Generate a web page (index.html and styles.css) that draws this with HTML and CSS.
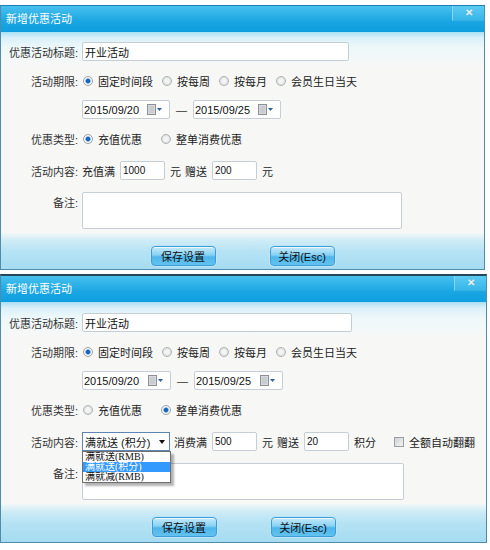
FILE: index.html
```html
<!DOCTYPE html>
<html lang="zh-CN">

<head>
    <meta charset="UTF-8">
    <link rel="stylesheet" href="styles.css">
    <title>新增优惠活动</title>
</head>

<body>
    <!-- 充值优惠 -->
    <div class="dialog d1">
        <div class="titlebar">
            <span class="title">新增优惠活动</span>
            <span class="close">✕</span>
        </div>
        <div class="body">
            <div class="row">
                <label class="lbl">优惠活动标题:</label>
                <input type="text" class="txt title-input" value="开业活动">
            </div>
            <div class="row">
                <label class="lbl">活动期限:</label>
                <span class="opt"><i class="radio on"></i>固定时间段</span>
                <span class="opt"><i class="radio"></i>按每周</span>
                <span class="opt"><i class="radio"></i>按每月</span>
                <span class="opt"><i class="radio"></i>会员生日当天</span>
            </div>
            <div class="row">
                <label class="lbl"></label>
                <div class="date">
                    <span class="date-val">2015/09/20</span>
                    <svg class="cal" width="16" height="11" viewBox="0 0 16 11">
                        <rect x="0.5" y="0.5" width="8" height="10" fill="#e4e6e8" stroke="#8c9096" />
                        <rect x="1.5" y="1.5" width="6" height="8" fill="#c9ccd0" />
                        <polygon points="10,4 15,4 12.5,7" fill="#2d5fa6" />
                    </svg>
                </div>
                <span class="dash">—</span>
                <div class="date">
                    <span class="date-val">2015/09/25</span>
                    <svg class="cal" width="16" height="11" viewBox="0 0 16 11">
                        <rect x="0.5" y="0.5" width="8" height="10" fill="#e4e6e8" stroke="#8c9096" />
                        <rect x="1.5" y="1.5" width="6" height="8" fill="#c9ccd0" />
                        <polygon points="10,4 15,4 12.5,7" fill="#2d5fa6" />
                    </svg>
                </div>
            </div>
            <div class="row type-row">
                <label class="lbl">优惠类型:</label>
                <span class="opt"><i class="radio on"></i>充值优惠</span>
                <span class="opt"><i class="radio"></i>整单消费优惠</span>
            </div>
            <div class="row content-row">
                <label class="lbl">活动内容:</label>
                <span>充值满</span>
                <input type="text" class="txt num" value="1000">
                <span>元</span>
                <span>赠送</span>
                <input type="text" class="txt num" value="200">
                <span>元</span>
            </div>
            <div class="row remark-row">
                <label class="lbl">备注:</label>
                <textarea class="remark"></textarea>
            </div>
        </div>
        <div class="footer">
            <button class="btn">保存设置</button>
            <button class="btn">关闭(Esc)</button>
        </div>
    </div>

    <!-- 整单消费优惠 -->
    <div class="dialog d2">
        <div class="titlebar">
            <span class="title">新增优惠活动</span>
            <span class="close">✕</span>
        </div>
        <div class="body">
            <div class="row">
                <label class="lbl">优惠活动标题:</label>
                <input type="text" class="txt title-input" value="开业活动">
            </div>
            <div class="row">
                <label class="lbl">活动期限:</label>
                <span class="opt"><i class="radio on"></i>固定时间段</span>
                <span class="opt"><i class="radio"></i>按每周</span>
                <span class="opt"><i class="radio"></i>按每月</span>
                <span class="opt"><i class="radio"></i>会员生日当天</span>
            </div>
            <div class="row">
                <label class="lbl"></label>
                <div class="date">
                    <span class="date-val">2015/09/20</span>
                    <svg class="cal" width="16" height="11" viewBox="0 0 16 11">
                        <rect x="0.5" y="0.5" width="8" height="10" fill="#e4e6e8" stroke="#8c9096" />
                        <rect x="1.5" y="1.5" width="6" height="8" fill="#c9ccd0" />
                        <polygon points="10,4 15,4 12.5,7" fill="#2d5fa6" />
                    </svg>
                </div>
                <span class="dash">—</span>
                <div class="date">
                    <span class="date-val">2015/09/25</span>
                    <svg class="cal" width="16" height="11" viewBox="0 0 16 11">
                        <rect x="0.5" y="0.5" width="8" height="10" fill="#e4e6e8" stroke="#8c9096" />
                        <rect x="1.5" y="1.5" width="6" height="8" fill="#c9ccd0" />
                        <polygon points="10,4 15,4 12.5,7" fill="#2d5fa6" />
                    </svg>
                </div>
            </div>
            <div class="row type-row">
                <label class="lbl">优惠类型:</label>
                <span class="opt"><i class="radio"></i>充值优惠</span>
                <span class="opt"><i class="radio on"></i>整单消费优惠</span>
            </div>
            <div class="row content-row">
                <label class="lbl">活动内容:</label>
                <div class="select">
                    <span>满就送 (积分)</span>
                    <i class="arrow"></i>
                    <div class="list">
                        <div>满就送(RMB)</div>
                        <div class="hl">满就送(积分)</div>
                        <div>满就减(RMB)</div>
                    </div>
                </div>
                <span>消费满</span>
                <input type="text" class="txt num" value="500">
                <span>元</span>
                <span>赠送</span>
                <input type="text" class="txt num" value="20">
                <span>积分</span>
                <span class="check"><i class="chk"></i>全额自动翻翻</span>
            </div>
            <div class="row remark-row">
                <label class="lbl">备注:</label>
                <textarea class="remark"></textarea>
            </div>
        </div>
        <div class="footer">
            <button class="btn">保存设置</button>
            <button class="btn">关闭(Esc)</button>
        </div>
    </div>
</body>

</html>
```

FILE: styles.css
```css
body {
    margin: 0;
    padding-top: 5px;
    background: #fff;
    font-family: "Liberation Sans", "Noto Sans CJK SC", sans-serif;
    font-size: 11px;
    color: #222;
}

.dialog {
    width: 485px;
    box-sizing: border-box;
    border: 1px solid #4f8cab;
    border-top: 1px solid #1d7fb6;
    background: #f7f8f6;
}

.d2 {
    width: 487px;
    margin-top: 4px;
    border-top: 2px solid #22465a;
}

.titlebar {
    height: 26px;
    display: flex;
    justify-content: space-between;
    align-items: flex-start;
    background: linear-gradient(#48c0ee, #1aa6e2 60%, #0e9edf);
}

.title {
    color: #fff;
    line-height: 27px;
    padding-left: 5px;
}

.close {
    width: 31px;
    height: 14px;
    line-height: 14px;
    text-align: center;
    color: #e6f2f7;
    font-size: 10px;
    font-weight: bold;
    text-shadow: 0 0 1px #7a9aab;
    background: linear-gradient(#5ccbf2, #36b6e9);
    border-left: 1px solid #86d6f3;
    border-bottom: 1px solid #3bb0e2;
}

.body {
    padding-top: 5px;
    background: linear-gradient(#a9e0f4 0, #dbf1f9 6px, #eef8fa 16px, #f7f8f6 36px);
}

.d2 .body {
    padding-top: 6px;
}

.row {
    display: flex;
    align-items: center;
    height: 29px;
    gap: 4px;
}

.lbl {
    width: 81px;
    flex: none;
    box-sizing: border-box;
    padding-right: 4px;
    text-align: right;
    color: #333;
    margin-right: -4px;
}

.txt {
    box-sizing: border-box;
    height: 19px;
    border: 1px solid #c6ced5;
    border-radius: 2px;
    background: #fff;
    padding: 0 2px;
    font-family: "Liberation Sans", "Noto Sans CJK SC", sans-serif;
    color: #111;
    outline: none;
}

.title-input {
    width: 267px;
    font-size: 11px;
}

.d2 .title-input {
    width: 270px;
}

.num {
    width: 45px;
    font-size: 10px;
    margin: 0 1px;
}

.opt {
    display: inline-flex;
    align-items: center;
    margin-left: 1px;
    margin-right: 4px;
}

.type-row .opt {
    margin-right: 14px;
}

.radio {
    width: 10px;
    height: 10px;
    box-sizing: border-box;
    margin-right: 5px;
    border-radius: 50%;
    border: 1px solid #aeb1b4;
    background: radial-gradient(circle, #f4f4f4 0 30%, #d6d8da 90%);
}

.radio.on {
    border-color: #9da3a8;
    background: radial-gradient(circle, #1a64bd 0 28%, #5b9ad9 40%, #fff 55%, #dfe1e3 95%);
}

.date {
    width: 88px;
    height: 19px;
    box-sizing: border-box;
    display: flex;
    align-items: center;
    border: 1px solid #c6ced5;
    border-radius: 2px;
    background: #fff;
    padding-left: 1px;
}

.d2 .date {
    width: 89px;
}

.date-val {
    flex: 1;
    color: #111;
}

.cal {
    margin-right: 6px;
}

.dash {
    width: 15px;
    text-align: center;
    color: #333;
}

.content-row {
    margin-top: 3px;
}

.remark-row {
    height: 37px;
    margin-top: 7px;
    align-items: flex-start;
}

.remark-row .lbl {
    padding-top: 4px;
    line-height: 14px;
}

.remark {
    width: 320px;
    height: 37px;
    box-sizing: border-box;
    margin: 0;
    border: 1px solid #c6ced5;
    border-radius: 2px;
    background: #fff;
    resize: none;
}

.d2 .remark {
    width: 322px;
}

.select {
    position: relative;
    width: 88px;
    height: 19px;
    box-sizing: border-box;
    display: flex;
    align-items: center;
    justify-content: space-between;
    padding: 0 4px 0 2px;
    border: 1px solid #5f86b3;
    background: #fff;
    font-size: 11px;
    color: #111;
}

.arrow {
    width: 0;
    height: 0;
    border-left: 3px solid transparent;
    border-right: 3px solid transparent;
    border-top: 4px solid #111;
}

.list {
    position: absolute;
    left: -1px;
    top: 18px;
    width: 89px;
    box-sizing: border-box;
    border: 1px solid #6f6f6f;
    background: #fff;
    box-shadow: 3px 3px 2px rgba(0, 0, 0, 0.3);
    font-family: "Liberation Serif", "Noto Sans CJK SC", serif;
    font-size: 10px;
    line-height: 10px;
    z-index: 2;
}

.list div {
    height: 10px;
    padding-left: 2px;
    white-space: nowrap;
    overflow: hidden;
}

.list .hl {
    background: #3399ff;
    color: #fff;
}

.check {
    display: inline-flex;
    align-items: center;
    margin-left: 14px;
}

.chk {
    width: 10px;
    height: 10px;
    box-sizing: border-box;
    margin-right: 5px;
    border: 1px solid #9c9fa2;
    background: linear-gradient(135deg, #cfd1d3, #f4f4f4);
}

.footer {
    display: flex;
    justify-content: center;
    gap: 54px;
    margin-top: 4px;
    padding: 13px 0 3px;
    background: linear-gradient(#f1f7f7 0, #cdebf6 8px, #b3e2f4 20px, #a6dbf1);
}

.d2 .footer {
    padding-bottom: 5px;
}

.btn {
    width: 65px;
    height: 20px;
    padding: 0;
    border: 1px solid #3d9ed7;
    border-radius: 4px;
    background: linear-gradient(#c6eafb, #86d1f3 45%, #4fb6ea 55%, #62c2ef);
    box-shadow: 0 0 0 1px #bde5f7, inset 0 1px 0 rgba(255, 255, 255, 0.7);
    font-family: "Liberation Sans", "Noto Sans CJK SC", sans-serif;
    font-size: 11px;
    color: #111;
    cursor: pointer;
}
```
